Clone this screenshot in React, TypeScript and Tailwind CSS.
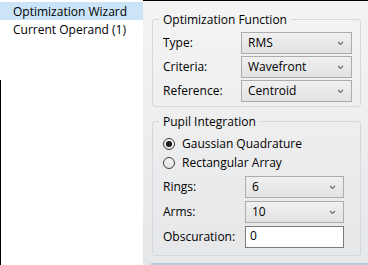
import { ReactNode } from "react";

function Chevron() {
  return (
    <svg width="7" height="5" viewBox="0 0 7 5" className="shrink-0">
      <path d="M1 1 L3.5 3.5 L6 1" fill="none" stroke="#6b6b6b" strokeWidth="1.1" />
    </svg>
  );
}

function Select({ value, width }: { value: string; width: string }) {
  return (
    <div
      className={`${width} h-[22px] flex items-center justify-between pl-[6px] pr-[7px] border border-[#acacac] bg-gradient-to-b from-[#f0f0f0] to-[#e3e3e3] text-black`}
    >
      <span>{value}</span>
      <Chevron />
    </div>
  );
}

function Row({ label, labelWidth, children }: { label: string; labelWidth: string; children: ReactNode }) {
  return (
    <div className="flex items-center">
      <span className={`${labelWidth} shrink-0`}>{label}</span>
      {children}
    </div>
  );
}

function Radio({ label, checked }: { label: string; checked?: boolean }) {
  return (
    <div className="flex items-center h-[19px] gap-[7px]">
      <span className="w-[12px] h-[12px] rounded-full border border-[#3c3c3c] bg-gradient-to-b from-[#f4f4f4] to-[#e2e2e2] flex items-center justify-center">
        {checked && <span className="w-[6px] h-[6px] rounded-full bg-[#1b1b1b]" />}
      </span>
      <span>{label}</span>
    </div>
  );
}

export default function App() {
  return (
    <div
      className="w-[368px] h-[265px] flex overflow-hidden text-[12px] text-black"
      style={{ fontFamily: '"Open Sans", "Noto Sans", sans-serif' }}
    >
      {/* Tree / list */}
      <div className="w-[143px] shrink-0 bg-white pt-[2px] relative">
        <div className="absolute left-0 top-[80px] bottom-0 w-[1px] bg-black" />
        <div className="h-[18px] leading-[19px] pl-[13px] bg-[#cce4f7]">Optimization Wizard</div>
        <div className="h-[18px] leading-[19px] pl-[13px]">Current Operand (1)</div>
      </div>

      {/* Settings panel */}
      <div className="flex-1 flex flex-col bg-gradient-to-b from-[#f4f4f4] to-[#e6e7e9] border-t border-black">
        <div className="flex-1 pl-[9px] pr-[7px] pt-[10px] flex flex-col gap-[6px]">
          <fieldset className="border border-[#d3d8dc] rounded-[3px] pl-[10px] pr-[8px] pb-[4px]">
            <legend className="px-[4px] -ml-[4px] leading-[17px]">Optimization Function</legend>
            <div className="flex flex-col gap-[2px] mt-[4px]">
              <Row label="Type:" labelWidth="w-[78px]">
                <Select value="RMS" width="w-[111px]" />
              </Row>
              <Row label="Criteria:" labelWidth="w-[78px]">
                <Select value="Wavefront" width="w-[111px]" />
              </Row>
              <Row label="Reference:" labelWidth="w-[78px]">
                <Select value="Centroid" width="w-[111px]" />
              </Row>
            </div>
          </fieldset>

          <fieldset className="border border-[#d3d8dc] rounded-[3px] pl-[10px] pr-[8px] pb-[7px]">
            <legend className="px-[4px] -ml-[4px] leading-[17px]">Pupil Integration</legend>
            <div className="mt-[4px]">
              <Radio label="Gaussian Quadrature" checked />
              <Radio label="Rectangular Array" />
            </div>
            <div className="flex flex-col gap-[3px] mt-[4px]">
              <Row label="Rings:" labelWidth="w-[82px]">
                <Select value="6" width="w-[99px]" />
              </Row>
              <Row label="Arms:" labelWidth="w-[82px]">
                <Select value="10" width="w-[99px]" />
              </Row>
              <Row label="Obscuration:" labelWidth="w-[82px]">
                <div className="w-[99px] h-[22px] border border-[#7a7a7a] bg-white pl-[4px] leading-[18px]">0</div>
              </Row>
            </div>
          </fieldset>
        </div>
        <div className="h-[2px] ml-[8px] bg-[#b7cbde]" />
      </div>
    </div>
  );
}
